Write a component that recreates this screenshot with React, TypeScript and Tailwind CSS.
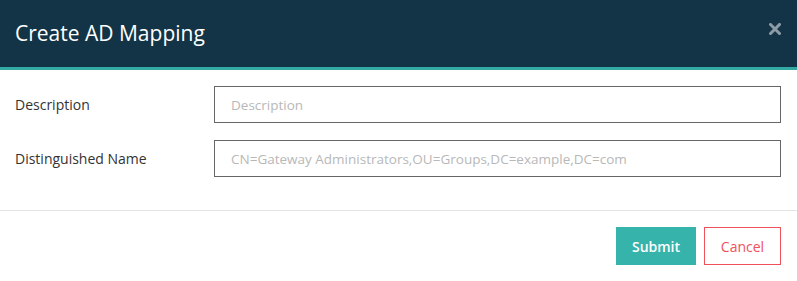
import React from 'react';

export default function App() {
  return (
    <div className="w-[797px] h-[281px] bg-white" style={{ fontFamily: '"Open Sans", "Noto Sans", sans-serif' }}>
      <div className="h-[67px] bg-[#133447] flex items-center justify-between pl-[15px] pr-[16px]">
        <h1 className="text-[21px] text-white">Create AD Mapping</h1>
        <svg width="12" height="12" viewBox="0 0 12 12" className="-mt-[10px]">
          <path d="M1.5 1.5 L10.5 10.5 M10.5 1.5 L1.5 10.5" stroke="#8c9ba6" strokeWidth="3" strokeLinecap="square" />
        </svg>
      </div>
      <div className="h-[3px] bg-[#33aaa3]" />
      <div className="pl-[15px] pr-[16px] pt-[16px] pb-[16px] flex flex-col gap-[17px]">
        <div className="flex items-center">
          <label className="w-[199px] text-[14px] text-[#333]">Description</label>
          <input
            className="flex-1 h-[37px] border border-[#666] px-[16px] text-[13.5px] outline-none placeholder:text-[#b8b8b8]"
            placeholder="Description"
          />
        </div>
        <div className="flex items-center">
          <label className="w-[199px] text-[14px] text-[#333]">Distinguished Name</label>
          <input
            className="flex-1 h-[37px] border border-[#666] px-[16px] text-[13.5px] outline-none placeholder:text-[#b8b8b8]"
            placeholder="CN=Gateway Administrators,OU=Groups,DC=example,DC=com"
          />
        </div>
      </div>
      <div className="mt-[17px] border-t border-[#e5e5e5]" />
      <div className="flex justify-end gap-[8px] pr-[16px] pt-[16px]">
        <button className="w-[80px] h-[38px] bg-[#36b3aa] text-white text-[14px] font-semibold">Submit</button>
        <button className="w-[77px] h-[38px] border border-[#f0505a] text-[#f0505a] text-[14px]">Cancel</button>
      </div>
    </div>
  );
}
